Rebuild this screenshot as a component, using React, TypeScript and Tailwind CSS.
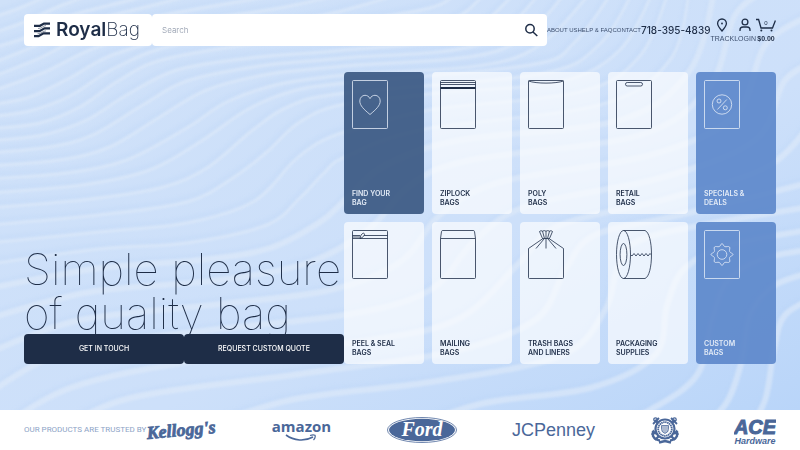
import { ReactNode } from 'react';

type Point = [number, number];

const curves: Point[][] = [
  [[-10, 18], [20, 8], [60, -10]],
  [[-10, 34], [25, 22], [60, 6], [110, -12]],
  [[-10, 49], [30, 36], [70, 16], [130, 0], [170, -12]],
  [[-10, 64], [35, 46], [80, 24], [150, 6], [220, -12]],
  [[-10, 78], [40, 58], [85, 36], [160, 16], [260, -2], [310, -12]],
  [[-10, 92], [45, 72], [95, 48], [170, 25], [280, 8], [370, -12]],
  [[-10, 105], [30, 97], [70, 78], [115, 54], [200, 32], [320, 16], [420, -12]],
  [[-10, 117], [30, 111], [70, 96], [115, 68], [180, 44], [320, 26], [430, 8], [460, -12]],
  [[-10, 129], [40, 123], [80, 107], [120, 80], [170, 58], [300, 38], [440, 24], [490, -12]],
  [[-10, 141], [43, 135], [87, 120], [127, 95], [177, 70], [250, 58], [345, 50], [460, 36], [520, -12]],
  [[-10, 153], [50, 147], [93, 135], [143, 105], [187, 81], [260, 66], [345, 58], [480, 44], [545, -12]],
  [[-10, 166], [60, 160], [110, 147], [160, 117], [207, 90], [270, 74], [345, 66], [500, 50], [570, -12]],
  [[-10, 179], [67, 173], [127, 160], [187, 128], [227, 102], [280, 84], [345, 75], [515, 58], [595, -12]],
  [[-10, 193], [83, 185], [150, 170], [200, 142], [247, 110], [290, 92], [345, 83], [530, 65], [575, 42], [615, -12]],
  [[-10, 208], [83, 200], [160, 188], [207, 168], [253, 130], [290, 106], [345, 93], [540, 74], [600, 44], [635, -12]],
  [[-10, 225], [100, 215], [187, 202], [233, 178], [267, 152], [300, 122], [345, 104], [450, 92], [560, 82], [620, 50], [655, -12]],
  [[-10, 243], [100, 232], [187, 223], [253, 202], [293, 162], [315, 145], [345, 132], [430, 110], [580, 92], [640, 56], [670, -12]],
  [[-10, 264], [100, 249], [187, 243], [267, 225], [300, 198], [325, 172], [345, 157], [420, 130], [600, 105], [670, 60], [690, -12]],
  [[-10, 288], [100, 268], [200, 260], [270, 248], [320, 222], [345, 200], [385, 165], [460, 140], [620, 120], [690, 70], [715, -12]],
  [[-10, 318], [90, 292], [220, 280], [310, 262], [370, 228], [410, 185], [470, 160], [640, 135], [710, 85], [735, 15], [770, -12]],
  [[-10, 352], [80, 320], [220, 304], [330, 290], [400, 262], [440, 215], [500, 182], [650, 155], [735, 115], [765, 45], [810, 15]],
  [[-10, 392], [70, 350], [210, 330], [350, 314], [430, 290], [475, 240], [530, 205], [660, 178], [755, 140], [785, 80], [820, 60]],
  [[-10, 436], [70, 388], [200, 360], [370, 340], [460, 318], [520, 262], [560, 225], [670, 198], [770, 165], [820, 110]],
  [[50, 436], [130, 398], [300, 374], [450, 352], [535, 320], [565, 270], [595, 235], [680, 215], [820, 180]],
  [[180, 436], [290, 400], [430, 382], [560, 356], [605, 310], [620, 262], [655, 235], [820, 205]],
  [[390, 436], [480, 404], [590, 388], [655, 355], [667, 305], [685, 268], [730, 245], [820, 228]],
  [[590, 436], [650, 410], [697, 375], [712, 320], [728, 280], [765, 258], [820, 248]],
  [[690, 436], [725, 405], [742, 360], [750, 315], [775, 285], [820, 270]],
  [[745, 436], [765, 400], [774, 350], [785, 315], [820, 295]],
];

function toPath(pts: Point[]) {
  let d = `M${pts[0][0]} ${pts[0][1]}`;
  for (let i = 0; i < pts.length - 1; i++) {
    const p0 = pts[Math.max(i - 1, 0)];
    const p1 = pts[i];
    const p2 = pts[i + 1];
    const p3 = pts[Math.min(i + 2, pts.length - 1)];
    d += ` C${p1[0] + (p2[0] - p0[0]) / 6} ${p1[1] + (p2[1] - p0[1]) / 6} ${p2[0] - (p3[0] - p1[0]) / 6} ${p2[1] - (p3[1] - p1[1]) / 6} ${p2[0]} ${p2[1]}`;
  }
  return d;
}

function Waves() {
  return (
    <svg
      className="absolute inset-0 h-full w-full"
      viewBox="0 0 800 410"
      preserveAspectRatio="xMidYMid slice"
      fill="none"
      aria-hidden="true"
    >
      <defs>
        <linearGradient id="sky" x1="0" y1="0" x2="1" y2="1">
          <stop offset="0" stopColor="#cfe1f9" />
          <stop offset="0.6" stopColor="#cde0fa" />
          <stop offset="1" stopColor="#b9d5f9" />
        </linearGradient>
        <filter id="ridge" x="-5%" y="-5%" width="110%" height="110%" colorInterpolationFilters="sRGB">
          <feGaussianBlur stdDeviation="1" />
        </filter>
        <filter id="shade" x="-5%" y="-5%" width="110%" height="110%" colorInterpolationFilters="sRGB">
          <feGaussianBlur stdDeviation="2" />
        </filter>
      </defs>
      <rect width="800" height="410" fill="url(#sky)" />
      <g filter="url(#shade)" stroke="#b4d0f5" strokeWidth="4" opacity="0.25" transform="translate(-1 -4)">
        {curves.map((points, i) => (
          <path key={i} d={toPath(points)} />
        ))}
      </g>
      <g filter="url(#ridge)" stroke="#e0ebf9" opacity="0.6">
        {curves.map((points, i) => (
          <path key={i} d={toPath(points)} strokeWidth={i < 18 ? 3 : 6} />
        ))}
      </g>
    </svg>
  );
}

function Logo() {
  return (
    <svg className="h-4 w-4" viewBox="0 0 16 16" fill="none" stroke="#1e2d47" strokeWidth="2.200" aria-hidden="true">
      <path d="M0 3.800H6L10 1.600H16M0 9.200H5.500L10.500 6.400H16M0 14.200H4.500L9.500 11.400H16" />
      <path d="M4 6.500C8 6.500 9 3.600 12 3.600M3.500 11.800C7.500 11.800 8.500 8.900 12 8.900" strokeWidth="0.500" />
    </svg>
  );
}

function SearchIcon() {
  return (
    <svg className="h-4 w-4" viewBox="0 0 16 16" fill="none" stroke="#1e2d47" strokeWidth="1.5" aria-hidden="true">
      <circle cx="7" cy="6.800" r="4.200" />
      <path d="M10 10L14.300 14" />
    </svg>
  );
}

function TrackIcon() {
  return (
    <svg className="h-4 w-4" viewBox="0 0 16 16" fill="none" stroke="#1e2d47" strokeWidth="1.3" aria-hidden="true">
      <path d="M8 14C5 10.600 3.600 8.600 3.600 6.500A4.400 4.500 0 0 1 12.400 6.500C12.400 8.600 11 10.600 8 14Z" />
      <circle cx="8" cy="6.500" r="0.900" fill="#1e2d47" stroke="none" />
    </svg>
  );
}

function LoginIcon() {
  return (
    <svg className="h-4 w-4" viewBox="0 0 16 16" fill="none" stroke="#1e2d47" strokeWidth="1.300" aria-hidden="true">
      <circle cx="8" cy="5" r="2.900" />
      <path d="M3 14V13A3 3 0 0 1 6 10H10A3 3 0 0 1 13 13V14" />
    </svg>
  );
}

function CartIcon() {
  return (
    <svg className="h-4 w-5" viewBox="0 0 20 16" fill="none" stroke="#1e2d47" strokeWidth="1.300" aria-hidden="true">
      <path d="M0 2.500H2.600L5 11H16.500L19.400 3.500" />
      <circle cx="5.300" cy="13.500" r="1" fill="#1e2d47" stroke="none" />
      <circle cx="15.500" cy="13.500" r="1" fill="#1e2d47" stroke="none" />
    </svg>
  );
}

const sheet = <rect x="0.5" y="0.5" width="35" height="48" rx="1" />;

const drawings: Record<string, ReactNode> = {
  heart: (
    <>
      {sheet}
      <path d="M18 34.500C12 29.500 7.800 25.600 7.800 21C7.800 17.600 10.200 15.300 13 15.300C15.200 15.300 17 16.500 18 18.600C19 16.500 20.800 15.300 23 15.300C25.800 15.300 28.200 17.600 28.200 21C28.200 25.600 24 29.500 18 34.500Z" />
    </>
  ),
  ziplock: (
    <>
      {sheet}
      <path d="M0.500 2.500H35.500M0.500 4.500H35.500" />
      <path d="M0.500 8H35.500" strokeWidth="1.800" />
    </>
  ),
  poly: (
    <>
      {sheet}
      <path d="M0.500 1C8 3.800 28 3.800 35.500 1" />
    </>
  ),
  retail: (
    <>
      {sheet}
      <rect x="9.500" y="2.500" width="17" height="3.500" rx="1.700" />
    </>
  ),
  percent: (
    <>
      {sheet}
      <circle cx="18" cy="24.500" r="9.700" />
      <circle cx="15" cy="21" r="2" />
      <circle cx="21.300" cy="27.800" r="2" />
      <path d="M22.800 19.500L13.400 29.500" />
    </>
  ),
  peel: (
    <>
      {sheet}
      <path d="M0.500 8.500H35.500M12 5.500H35.500M0.500 5.500H8M0.500 7H8" />
      <path d="M8 8.500L9 5L11 3.200C12 3 13 4 12.400 5L10.400 7.500Z" />
    </>
  ),
  mailing: (
    <>
      <path d="M0.500 8.500L1.500 1.500Q1.700 0.500 2.800 0.500H33.200Q34.300 0.500 34.500 1.500L35.500 8.500V47.500Q35.500 48.500 34.500 48.500H1.500Q0.500 48.500 0.500 47.500Z" />
      <path d="M0.500 8.500H35.500" />
    </>
  ),
  trash: (
    <>
      <path d="M15 8.500L0.500 18.500V47.500Q0.500 48.500 1.500 48.500H34.500Q35.500 48.500 35.500 47.500V18.500L21 8.500" />
      <path d="M14.500 8.500L11.500 1.500Q13 0 14.500 1.200Q16.200 0 18 1.200Q19.800 0 21.500 1.200Q23 0 24.500 1.500L21.500 8.500Z" />
      <path d="M14.500 1.200L16.500 8.500M18 1.200V18.500M21.500 1.200L19.500 8.500M16 9L8 18.500M20 9L28 18.500" />
    </>
  ),
  tape: (
    <>
      <ellipse cx="7.500" cy="24.500" rx="7" ry="24" />
      <ellipse cx="7.500" cy="24.500" rx="3.400" ry="11" />
      <path d="M7.500 0.500H29C33 2 35.500 12 35.500 24.500C35.500 37 33 47 29 48.500H7.500" />
      <path d="M14.500 24.500L16 26L18 23.500L20 26L22 23.500L24 26L26 23.500L28 26L30 23.500L32 26L34 23.500L35.500 25" />
    </>
  ),
  gear: (
    <>
      {sheet}
      <circle cx="18" cy="24.500" r="4.800" />
      <path d="M18 13.500C19 13.500 19.300 16 20.800 16.600C22.300 17.200 24.500 15.800 25.500 17C26.500 18 25 20 25.700 21.600C26.300 23 29 23.300 29 24.500C29 25.700 26.300 26 25.700 27.400C25 29 26.500 31 25.500 32C24.500 33.200 22.300 31.800 20.800 32.400C19.300 33 19 35.500 18 35.500C17 35.500 16.700 33 15.200 32.400C13.700 31.800 11.500 33.200 10.500 32C9.500 31 11 29 10.300 27.400C9.700 26 7 25.700 7 24.500C7 23.300 9.700 23 10.300 21.600C11 20 9.500 18 10.500 17C11.500 15.800 13.700 17.200 15.200 16.600C16.700 16 17 13.500 18 13.500Z" />
    </>
  ),
};

const light = 'bg-white/65 text-[#1e2d47]';
const blue = 'bg-[#5b86ca]/90 text-[#e3ebf7]';
const navy = 'bg-[#37557f]/90 text-[#e3ebf7]';

const categories = [
  { icon: 'heart', lines: ['FIND YOUR', 'BAG'], tone: navy },
  { icon: 'ziplock', lines: ['ZIPLOCK', 'BAGS'], tone: light },
  { icon: 'poly', lines: ['POLY', 'BAGS'], tone: light },
  { icon: 'retail', lines: ['RETAIL', 'BAGS'], tone: light },
  { icon: 'percent', lines: ['SPECIALS &', 'DEALS'], tone: blue },
  { icon: 'peel', lines: ['PEEL & SEAL', 'BAGS'], tone: light },
  { icon: 'mailing', lines: ['MAILING', 'BAGS'], tone: light },
  { icon: 'trash', lines: ['TRASH BAGS', 'AND LINERS'], tone: light },
  { icon: 'tape', lines: ['PACKAGING', 'SUPPLIES'], tone: light },
  { icon: 'gear', lines: ['CUSTOM', 'BAGS'], tone: blue },
];

function Header() {
  return (
    <header className="flex h-8 items-center">
      <a href="#" className="flex h-8 w-32 shrink-0 items-center gap-1.5 rounded bg-white pl-2.5 text-[19px] text-[#1e2d47]">
        <Logo />
        <span>
          <span className="font-semibold">Royal</span>
          <span className="font-extralight">Bag</span>
        </span>
      </a>
      <form className="flex h-8 min-w-0 flex-1 items-center rounded bg-white pr-2" onSubmit={(e) => e.preventDefault()}>
        <input
          type="search"
          aria-label="Search"
          placeholder="Search"
          className="h-full min-w-0 flex-1 px-2.5 text-[8px] text-[#1e2d47] outline-none placeholder:text-[#a3abb9]"
        />
        <button type="submit" aria-label="Submit search">
          <SearchIcon />
        </button>
      </form>
      <nav className="flex shrink-0 items-center font-['Liberation_Sans',sans-serif] text-[6px] text-[#3d4f6e]">
        <a href="#about">ABOUT US</a>
        <a href="#help">HELP &amp; FAQ</a>
        <a href="#contact">CONTACT</a>
      </nav>
      <a href="tel:7183954839" className="shrink-0 font-['Inter',sans-serif] text-[10px] font-medium text-[#1e2d47]">
        718-395-4839
      </a>
      <div className="flex shrink-0 pt-px font-['Liberation_Sans',sans-serif] text-[7px] leading-3 text-[#3d4f6e]">
        <a href="#track" className="flex flex-col items-center">
          <TrackIcon />
          TRACK
        </a>
        <a href="#login" className="flex flex-col items-center">
          <LoginIcon />
          LOGIN
        </a>
        <a href="#cart" className="relative flex flex-col items-center font-bold text-[#1e2d47]">
          <CartIcon />
          <span className="absolute top-0.5 text-[6px] leading-2 font-normal">0</span>
          $0.00
        </a>
      </div>
    </header>
  );
}

function Brands() {
  return (
    <div className="flex flex-1 items-center justify-between text-[#4a6799]">
      <svg className="h-8 w-[70px]" viewBox="0 0 70 32" role="img" aria-label="Kellogg's">
        <text
          x="35"
          y="22"
          textAnchor="middle"
          transform="rotate(-5 35 16)"
          fill="currentColor"
          stroke="currentColor"
          strokeWidth="0.8"
          className="font-['Liberation_Serif',serif] text-[18px] font-bold italic"
        >
          Kellogg's
        </text>
      </svg>
      <span className="flex flex-col items-center font-['Open_Sans',sans-serif] text-[15px] leading-4 font-bold">
        amazon
        <svg className="h-2 w-8" viewBox="0 0 32 8" fill="none" stroke="currentColor" aria-hidden="true">
          <path d="M1 1C9 7 20 7.500 28 3" strokeWidth="1.600" />
          <path d="M25 1.500C27 0.800 29 0.800 30 1.300C30.500 2.500 29.800 4.500 28.500 6" strokeWidth="1.200" />
        </svg>
      </span>
      <svg className="h-[26px] w-[70px]" viewBox="0 0 70 26" role="img" aria-label="Ford">
        <ellipse cx="35" cy="13" rx="34.500" ry="12.500" fill="none" stroke="currentColor" strokeWidth="0.800" />
        <ellipse cx="35" cy="13" rx="33" ry="11.200" fill="currentColor" />
        <text
          x="35"
          y="19"
          textAnchor="middle"
          fill="#fff"
          className="font-['Liberation_Serif',serif] text-[20px] font-bold italic"
        >
          Ford
        </text>
      </svg>
      <span className="font-['Liberation_Sans',sans-serif] text-[18px] leading-6">JCPenney</span>
      <svg className="h-7 w-7" viewBox="0 0 28 28" fill="none" stroke="currentColor" role="img" aria-label="Coast Guard">
        <path d="M4 4L24 24M24 4L4 24" strokeWidth="2.400" />
        <circle cx="4.500" cy="3.500" r="1.700" strokeWidth="1.300" />
        <circle cx="23.500" cy="3.500" r="1.700" strokeWidth="1.300" />
        <path d="M2 8L8 2M26 8L20 2" strokeWidth="1.800" />
        <path d="M2 15V20Q4 24 9 24.500M26 15V20Q24 24 19 24.500M1 19L2.500 15.500L5 18M27 19L25.500 15.500L23 18M8 26.500L14 25L20 26.500" strokeWidth="2.400" />
        <circle cx="14" cy="13" r="9.500" fill="#fff" strokeWidth="2.200" />
        <circle cx="14" cy="13" r="6.800" strokeWidth="1.800" strokeDasharray="1.500 0.500" />
        <path d="M10.500 9.500H17.500V13.500Q17.500 16 14 17.500Q10.500 16 10.500 13.500Z" fill="#fff" strokeWidth="0.800" />
        <path d="M12 12V16M14 12V17M16 12V16M10.500 11H17.500" strokeWidth="0.900" />
      </svg>
      <svg className="h-8 w-[42px]" viewBox="0 0 42 32" fill="currentColor" role="img" aria-label="Ace Hardware">
        <text
          x="21"
          y="20"
          textAnchor="middle"
          stroke="currentColor"
          strokeWidth="1"
          className="font-['Liberation_Sans',sans-serif] text-[20px] font-bold italic"
        >
          ACE
        </text>
        <text x="21" y="30" textAnchor="middle" className="font-['Liberation_Sans',sans-serif] text-[9px] font-bold italic">
          Hardware
        </text>
      </svg>
    </div>
  );
}

export default function App() {
  return (
    <div className="flex min-h-screen flex-col font-['Inter',sans-serif]">
      <main className="relative flex flex-1 flex-col overflow-hidden">
        <Waves />
        <div className="relative flex flex-1 flex-col px-6 pt-3.5 pb-[46px] will-change-transform">
          <Header />
          <div className="mt-[26px] flex flex-1">
            <section className="flex min-w-80 flex-1 flex-col justify-end">
              <h1 className="-mb-px text-[44px] leading-[44px] font-thin whitespace-nowrap text-[#1e2d47]">
                Simple pleasure
                <br />
                of quality bag
              </h1>
              <div className="relative grid grid-cols-2">
                <button className="h-[30px] rounded bg-[#1e2d47] text-[7px] font-medium text-white">GET IN TOUCH</button>
                <button className="h-[30px] rounded bg-[#1e2d47] text-[7px] font-medium text-white">
                  REQUEST CUSTOM QUOTE
                </button>
              </div>
            </section>
            <section className="grid w-[54%] max-w-[432px] grid-cols-5 grid-rows-2 gap-2 max-lg:w-[432px]">
              {categories.map((category) => (
                <a
                  key={category.icon}
                  href={`#${category.icon}`}
                  className={`flex flex-col justify-between rounded px-2 pt-2 pb-[7px] ${category.tone}`}
                >
                  <svg className="h-[49px] w-9" viewBox="0 0 36 49" fill="none" stroke="currentColor" strokeWidth="0.8" aria-hidden="true">
                    {drawings[category.icon]}
                  </svg>
                  <span className="text-[7px] leading-[9px] font-semibold">
                    {category.lines[0]}
                    <br />
                    {category.lines[1]}
                  </span>
                </a>
              ))}
            </section>
          </div>
        </div>
      </main>
      <footer className="flex h-10 items-center bg-white px-6">
        <p className="font-['Roboto',sans-serif] text-[8px] text-[#8da3c6]">OUR PRODUCTS ARE TRUSTED BY</p>
        <Brands />
      </footer>
    </div>
  );
}
